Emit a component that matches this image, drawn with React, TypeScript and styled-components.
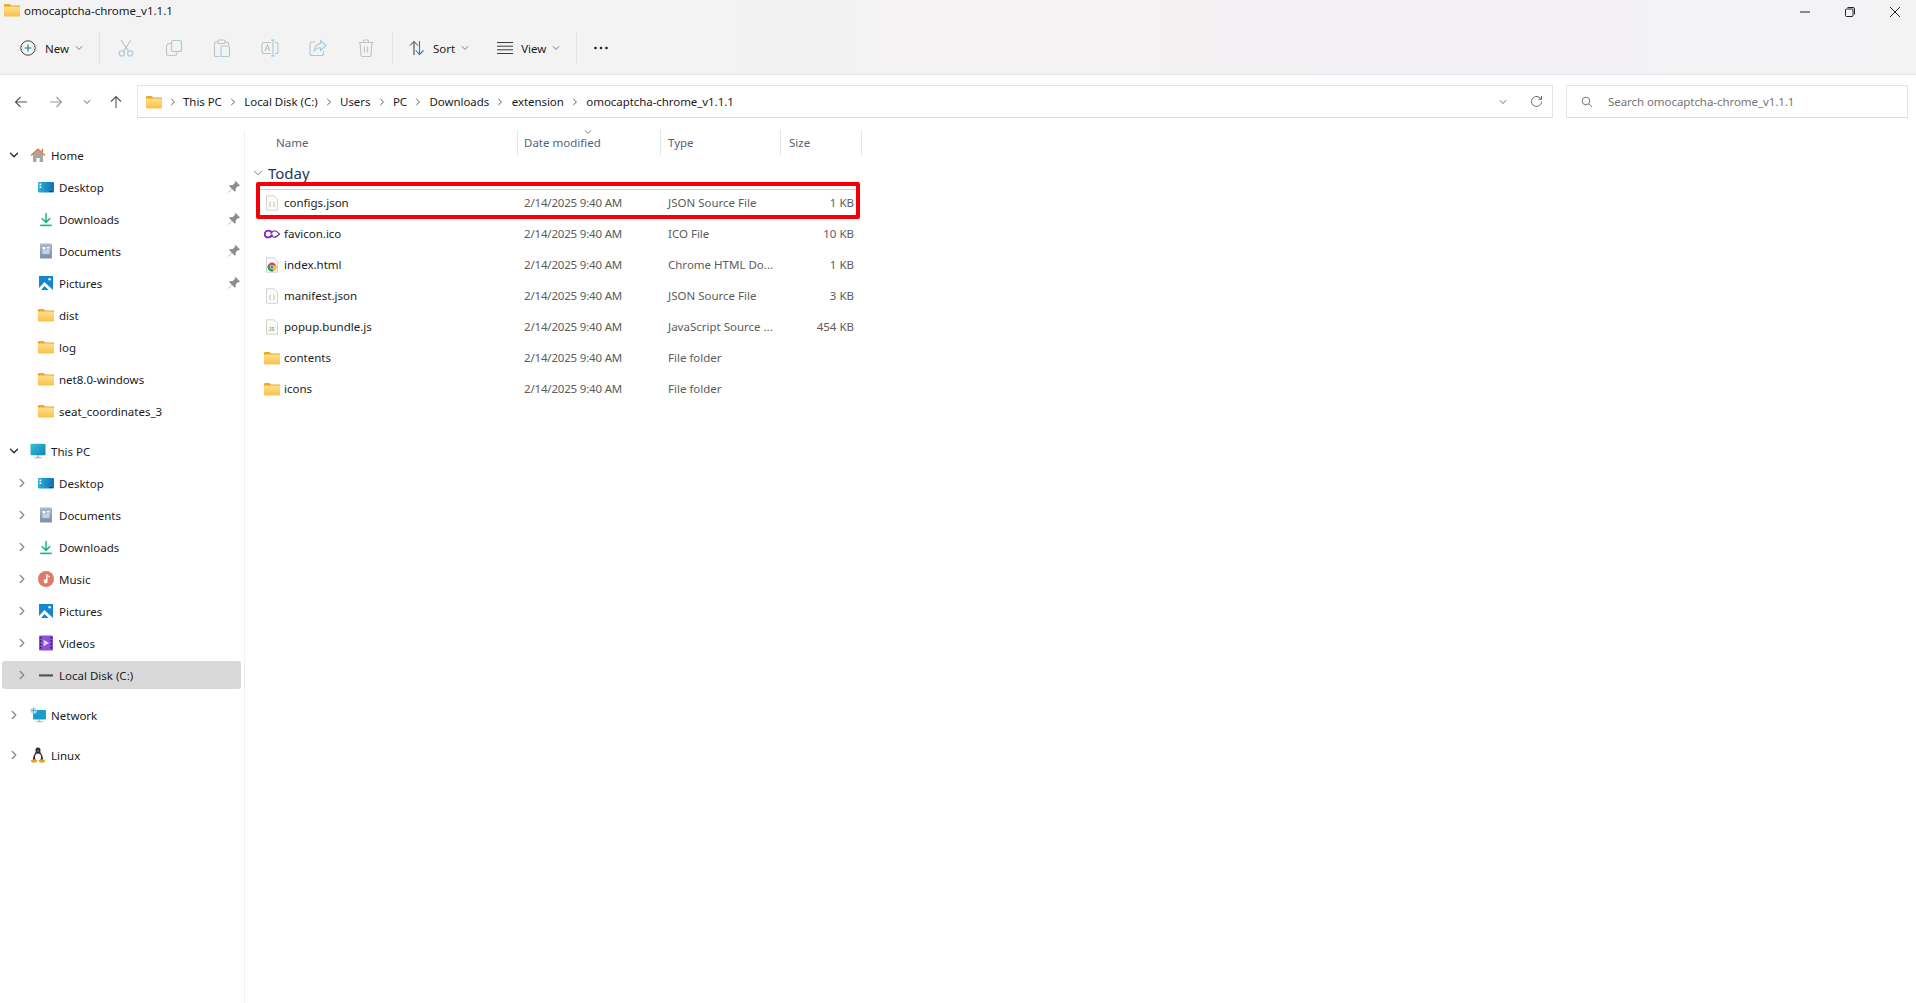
import React from "react";
import styled, { createGlobalStyle } from "styled-components";

const GlobalStyle = createGlobalStyle`
  html, body {
    margin: 0;
    height: 100%;
    overflow: hidden;
    background: #fff;
  }
  body {
    font-family: "Noto Sans", "Open Sans", "Liberation Sans", sans-serif;
    font-size: 11.5px;
    color: #1b1b1b;
  }
  svg {
    display: block;
    flex-shrink: 0;
  }
`;

const Window = styled.div`
  display: flex;
  flex-direction: column;
  height: 1003px;
`;

const Chrome = styled.div`
  background: linear-gradient(90deg, #f3f3f3 0%, #f3f3f4 35%, #f5f2f3 58%, #f3f1f6 75%, #f3f3f4 100%);
  border-bottom: 1px solid #e4e4e4;
`;

const TitleBar = styled.div`
  display: flex;
  align-items: center;
  height: 20px;
  padding: 0 16px 0 4px;
`;

const Title = styled.div`
  flex: 1;
  margin-left: 4px;
`;

const WinButtons = styled.div`
  display: flex;
  gap: 35px;
  padding-top: 4px;
`;

const Toolbar = styled.div`
  display: flex;
  align-items: center;
  height: 54px;
  box-sizing: border-box;
  padding: 2px 0 0 20px;
`;

const Label = styled.span`
  white-space: nowrap;
`;

const TextButton = styled.div<{ $ml?: number }>`
  display: flex;
  align-items: center;
  gap: 8px;
  margin-left: ${(p) => p.$ml ?? 0}px;
`;

const CaretBox = styled.div`
  margin-left: -2px;
`;

const ToolSep = styled.div<{ $ml: number }>`
  width: 1px;
  height: 32px;
  background: #e3e3e3;
  margin-left: ${(p) => p.$ml}px;
`;

const ToolGroup = styled.div`
  display: flex;
  margin-left: 2px;
`;

const ToolIcon = styled.div`
  display: flex;
  justify-content: center;
  width: 48px;
`;

const NavBar = styled.div`
  display: flex;
  align-items: flex-start;
  height: 55px;
  box-sizing: border-box;
  padding: 10px 8px 0 4px;
`;

const NavButtons = styled.div`
  display: grid;
  grid-template-columns: 34px 36px 25px 33px;
  justify-items: center;
  align-items: center;
  height: 33px;
`;

const AddressBox = styled.div`
  flex: 1;
  display: flex;
  align-items: center;
  height: 33px;
  margin-left: 5px;
  padding: 0 9px 0 8px;
  box-sizing: border-box;
  border: 1px solid #e5e5e5;
  border-bottom-color: #dcdcdc;
`;

const Crumbs = styled.div`
  flex: 1;
  display: flex;
  align-items: center;
  letter-spacing: -0.06px;
`;

const CrumbSep = styled.div<{ $w?: number }>`
  display: flex;
  justify-content: center;
  width: ${(p) => p.$w ?? 22.5}px;
`;

const AddressTools = styled.div`
  display: flex;
  align-items: center;
  gap: 23px;
`;

const SearchBox = styled.div`
  display: flex;
  align-items: center;
  gap: 15px;
  width: 342px;
  height: 33px;
  margin-left: 13px;
  padding-left: 14px;
  box-sizing: border-box;
  border: 1px solid #e5e5e5;
  border-bottom-color: #dcdcdc;
  color: #757575;
  letter-spacing: -0.06px;
`;

const Body = styled.div`
  flex: 1;
  display: flex;
  min-height: 0;
`;

const Sidebar = styled.div`
  width: 245px;
  padding-top: 9px;
  box-sizing: border-box;
  border-right: 1px solid #f0f0f0;
`;

const NavGroup = styled.div<{ $mb?: number }>`
  margin-bottom: ${(p) => p.$mb ?? 8}px;
`;

const TreeRow = styled.div<{ $nested?: boolean; $selected?: boolean }>`
  display: flex;
  align-items: center;
  height: ${(p) => (p.$selected ? 28 : 32)}px;
  margin: ${(p) => (p.$selected ? "2px 3px 2px 2px" : "0")};
  padding-left: ${(p) => (p.$nested ? 16 : 8) - (p.$selected ? 2 : 0)}px;
  padding-right: 3px;
  border-radius: 3px;
  background: ${(p) => (p.$selected ? "#d9d9d9" : "transparent")};
`;

const TreeCaret = styled.div`
  display: flex;
  justify-content: center;
  width: 12px;
  margin-right: 10px;
`;

const TreeLabel = styled.span`
  flex: 1;
  margin-left: 5px;
  white-space: nowrap;
`;

const Details = styled.div`
  flex: 1;
  min-width: 0;
  padding-left: 1px;
`;

const ColumnGrid = styled.div`
  display: grid;
  grid-template-columns: 272px 143px 120px 81px;
`;

const HeaderRow = styled(ColumnGrid)`
  height: 25px;
  align-items: stretch;
  color: #56627a;
`;

const HeaderCell = styled.div<{ $pad: number }>`
  position: relative;
  display: flex;
  align-items: center;
  padding-left: ${(p) => p.$pad}px;
  border-right: 1px solid #e5e5e5;
`;

const SortCaret = styled.div`
  position: absolute;
  top: -2px;
  left: 66px;
`;

const GroupHeader = styled.div`
  display: flex;
  align-items: center;
  gap: 5px;
  height: 28px;
  padding: 4px 0 0 7px;
  font-size: 15px;
  color: #1f3864;
`;

const FileRow = styled(ColumnGrid)<{ $marked?: boolean }>`
  position: relative;
  height: 31px;
  align-items: center;
  color: #5c5c5c;

  ${(p) =>
    p.$marked &&
    `
    &::before {
      content: "";
      position: absolute;
      top: 2px;
      left: 14px;
      width: 596px;
      height: 1px;
      background: #a9dde8;
    }
    &::after {
      content: "";
      position: absolute;
      top: -5px;
      left: 10px;
      width: 604px;
      height: 37px;
      box-sizing: border-box;
      border: 4px solid #f40006;
      border-radius: 2px;
    }
  `}
`;

const NameCell = styled.div`
  display: flex;
  align-items: center;
  gap: 4px;
  padding-left: 18px;
  color: #1b1b1b;
`;

const DateCell = styled.div`
  padding-left: 6px;
  white-space: nowrap;
  letter-spacing: -0.18px;
`;

const TypeCell = styled.div`
  padding-left: 7px;
  white-space: nowrap;
`;

const SizeCell = styled.div`
  padding-right: 8px;
  text-align: right;
`;

type CaretProps = { size?: number; color?: string; w?: number };

const caret = (d: string, { size = 10, color = "#666", w = 1.2 }: CaretProps) => (
  <svg width={size} height={size} viewBox="0 0 10 10" fill="none" stroke={color} strokeWidth={w}>
    <path d={d} strokeLinecap="round" strokeLinejoin="round" />
  </svg>
);
const CaretDown = (props: CaretProps) => caret("M1.5 3.2 5 6.8l3.5-3.6", props);
const CaretRight = (props: CaretProps) => caret("M3.2 1.5 6.8 5 3.2 8.5", props);

const FolderIcon = () => (
  <svg width="16" height="16" viewBox="0 0 16 16">
    <defs>
      <linearGradient id="fld" x1="0" y1="0" x2="0" y2="1">
        <stop offset="0" stopColor="#ffe08a" />
        <stop offset="1" stopColor="#fac04a" />
      </linearGradient>
    </defs>
    <path d="M0 3.2C0 2.5.5 2 1.2 2h4.2l1.8 1.6H16V6H0z" fill="#eda626" />
    <rect x="0" y="4.4" width="16" height="10.2" rx="1" fill="url(#fld)" />
  </svg>
);

const HomeIcon = () => (
  <svg width="16" height="16" viewBox="0 0 16 16">
    <path d="M3 7.5 8 3l5 4.5V15h-3.4v-4H6.4v4H3z" fill="#a6a6a4" />
    <path d="M.6 8 8 1.2 15.4 8l-.9 1L8 3.2 1.5 9z" fill="#e2723a" />
    <rect x="11.6" y="2" width="1.6" height="3" fill="#e2723a" />
  </svg>
);

const DesktopIcon = () => (
  <svg width="16" height="16" viewBox="0 0 16 16">
    <defs>
      <linearGradient id="dsk" x1="0" y1="0" x2="1" y2="0">
        <stop offset="0" stopColor="#2fb1d4" />
        <stop offset="1" stopColor="#0f6fb5" />
      </linearGradient>
    </defs>
    <rect x="0" y="3" width="16" height="10.5" rx="1" fill="url(#dsk)" />
    <rect x="1.5" y="4.6" width="1.8" height="1.6" fill="#fff" />
    <rect x="1.5" y="7.4" width="1.8" height="1.6" fill="#fff" />
    <rect x="11" y="12" width="4" height="1" fill="#0b4c80" />
  </svg>
);

const DownloadIcon = () => (
  <svg width="16" height="16" viewBox="0 0 16 16" fill="none" stroke="#17b28a" strokeWidth="1.5">
    <path d="M8 2v9.2M3.8 7.2 8 11.4l4.2-4.2" />
    <path d="M2.2 14.4h11.6" strokeWidth="1.6" />
  </svg>
);

const DocumentsIcon = () => (
  <svg width="16" height="16" viewBox="0 0 16 16">
    <defs>
      <linearGradient id="doc" x1="0" y1="0" x2="0" y2="1">
        <stop offset="0" stopColor="#a9bbd3" />
        <stop offset="1" stopColor="#7b8fae" />
      </linearGradient>
    </defs>
    <rect x="2" y="0.5" width="12" height="15" rx="1" fill="url(#doc)" />
    <path d="M4.5 4h3v2.4h-3zM9 4h2.5v1H9zM9 5.6h2.5v1H9zM4.5 7.6h7v1h-7zM4.5 9.6h7v1h-7z" fill="#fff" />
  </svg>
);

const PicturesIcon = () => (
  <svg width="16" height="16" viewBox="0 0 16 16">
    <rect x="1" y="1" width="14" height="14" fill="#1386cf" />
    <path d="M1 13 6.4 7l8.6 8H1z" fill="#fff" />
    <path d="M3 15l3.6-4 4 4z" fill="#1386cf" />
    <circle cx="11.6" cy="4.2" r="1.3" fill="#fff" />
  </svg>
);

const MusicIcon = () => (
  <svg width="16" height="16" viewBox="0 0 16 16">
    <circle cx="8" cy="8" r="8" fill="#dd7b68" />
    <path d="M8.2 3.2h1.4v7.2a2 2 0 1 1-1.4-1.9z" fill="#fff" />
    <path d="M9.6 3.2c.2 1.2 1.4 1.6 2.2 2.2v1.2c-.8-.4-1.8-.8-2.2-1.3z" fill="#fff" />
  </svg>
);

const VideosIcon = () => (
  <svg width="16" height="16" viewBox="0 0 16 16">
    <rect x="1" y="0.5" width="14" height="15" rx="1" fill="#8b4fd8" />
    <path d="M2 2h1.4v1.6H2zM2 5.2h1.4v1.6H2zM2 8.4h1.4V10H2zM2 11.8h1.4v1.6H2zM12.6 2H14v1.6h-1.4zM12.6 5.2H14v1.6h-1.4zM12.6 8.4H14V10h-1.4zM12.6 11.8H14v1.6h-1.4z" fill="#2a1650" />
    <path d="M5.6 4.8 11 8l-5.4 3.2z" fill="#e5d3fb" />
  </svg>
);

const DiskIcon = () => (
  <svg width="16" height="16" viewBox="0 0 16 16">
    <rect x="1" y="7" width="14" height="2.6" rx="0.6" fill="#555" />
    <rect x="1" y="7" width="14" height="1" fill="#7d7d7d" />
  </svg>
);

const MonitorIcon = () => (
  <svg width="16" height="16" viewBox="0 0 16 16">
    <defs>
      <linearGradient id="mon" x1="0" y1="0" x2="1" y2="1">
        <stop offset="0" stopColor="#35c3d6" />
        <stop offset="1" stopColor="#0f86b8" />
      </linearGradient>
    </defs>
    <rect x="0.5" y="0.8" width="15" height="11.4" rx="1" fill="url(#mon)" />
    <rect x="7.2" y="12.2" width="1.6" height="2" fill="#9fb0bb" />
    <rect x="4.6" y="14.2" width="6.8" height="1" fill="#9fb0bb" />
  </svg>
);

const NetworkIcon = () => (
  <svg width="16" height="16" viewBox="0 0 16 16">
    <rect x="3" y="3" width="13" height="9.4" rx="0.8" fill="#1b9ccb" />
    <rect x="8.8" y="12.4" width="1.4" height="1.8" fill="#9fb0bb" />
    <rect x="6.4" y="14.2" width="6.2" height="1" fill="#9fb0bb" />
    <circle cx="3.6" cy="3.6" r="3.2" fill="#bfe3f2" />
    <path d="M1 3.6h5.2M3.6 1v5.2" stroke="#3a9ccc" strokeWidth="0.8" />
  </svg>
);

const LinuxIcon = () => (
  <svg width="16" height="16" viewBox="0 0 16 16">
    <ellipse cx="8" cy="3.4" rx="2.5" ry="3" fill="#2b2b2b" />
    <path d="M5.600 5C5.200 7 3.200 8.600 3 11.200c-.1 1.600.8 2.800 2 2.800h6c1.200 0 2.100-1.200 2-2.800-.2-2.600-2.200-4.200-2.600-6.200z" fill="#2b2b2b" />
    <ellipse cx="8" cy="10.200" rx="3" ry="3.700" fill="#fff" />
    <path d="M6.900 3.600h2.200L8 5z" fill="#e9a21c" />
    <ellipse cx="4" cy="14" rx="3" ry="1.700" fill="#e9a21c" />
    <ellipse cx="12" cy="14" rx="3" ry="1.700" fill="#e9a21c" />
  </svg>
);

const PinIcon = () => (
  <svg width="14" height="14" viewBox="0 0 14 14">
    <path d="M8.6 1 13 5.4l-1 .8-1-.2-2.4 2.4.2 2.4-1 1L5 8.9 1.8 12.6l-.6-.4L4.8 8.7 2.1 6l1-1 2.4.2L8 2.8l-.2-1z" fill="#8a8f93" />
  </svg>
);

const PageIcon = ({ children }: { children?: React.ReactNode }) => (
  <svg width="16" height="16" viewBox="0 0 16 16">
    <path d="M2.5.8h7.600l3.400 3.400v11H2.500z" fill="#fcfcfa" stroke="#c6c6c6" strokeWidth="0.8" />
    {children}
  </svg>
);

const JsonIcon = () => (
  <PageIcon>
    <path d="M6.800 7c-1 0-.6 2.200-1.200 2.500.6.300.2 2.500 1.200 2.500M9.200 7c1 0 .6 2.200 1.200 2.500-.6.300-.2 2.500-1.200 2.500" fill="none" stroke="#a3ad7a" strokeWidth="0.8" />
  </PageIcon>
);

const JsIcon = () => (
  <PageIcon>
    <text x="4.400" y="12" fontSize="5" fontWeight="700" fontFamily="Liberation Sans" fill="#b1a75f">JS</text>
  </PageIcon>
);

const ChromeIcon = () => (
  <PageIcon>
    <circle cx="8" cy="10" r="4.400" fill="#e0473a" />
    <path d="M8 10 12 7.800a4.400 4.400 0 0 1-3 6.500z" fill="#f3c02c" />
    <path d="M8 10 9 14.300A4.400 4.400 0 0 1 4 8z" fill="#2fa34f" />
    <circle cx="8" cy="10" r="2" fill="#fff" />
    <circle cx="8" cy="10" r="1.500" fill="#3b78d8" />
  </PageIcon>
);

const FaviconIcon = () => (
  <svg width="16" height="16" viewBox="0 0 16 16" fill="none">
    <path d="M8 6.600C7 5.200 5.800 4.600 4.500 4.600 2.300 4.600.8 6 .8 8s1.500 3.400 3.700 3.400c1.700 0 2.900-1.300 4-3" stroke="#8e1fc0" strokeWidth="1.800" />
    <path d="M6.500 9.500c1.400 1 2.500 1.700 4 1.700 1.200 0 3.300-1.500 5-3.200-1.700-1.600-3.800-3.200-5-3.200-1.400 0-2.500 1.300-4 3" stroke="#5a2aa8" strokeWidth="1.100" />
  </svg>
);

const tint = { fill: "none", stroke: "#a9c8d9", strokeWidth: 1.1 };
const grey = { fill: "none", stroke: "#bcc4c9", strokeWidth: 1.1 };

const ScissorsIcon = () => (
  <svg width="18" height="18" viewBox="0 0 18 18">
    <path d="M4 1l7.800 11.600M14 1 6.200 12.600" {...grey} />
    <circle cx="4.800" cy="14.400" r="2.600" {...tint} />
    <circle cx="13.200" cy="14.400" r="2.600" {...tint} />
  </svg>
);
const CopyIcon = () => (
  <svg width="18" height="18" viewBox="0 0 18 18">
    <rect x="6.500" y="1.500" width="10" height="11" rx="2" {...tint} />
    <path d="M6.500 4.500h-2a3 3 0 0 0-3 3v6.500a2.500 2.500 0 0 0 2.500 2.500h5a3 3 0 0 0 3-3" {...grey} />
  </svg>
);
const PasteIcon = () => (
  <svg width="18" height="18" viewBox="0 0 18 18">
    <path d="M5 3H2.500a1 1 0 0 0-1 1v12.500a1 1 0 0 0 1 1H7M12 3h2.500a1 1 0 0 1 1 1v2" {...grey} />
    <rect x="5" y="1" width="7" height="3.500" rx="1" {...grey} />
    <rect x="8" y="7" width="8.500" height="10.500" rx="1.200" {...tint} />
  </svg>
);
const RenameIcon = () => (
  <svg width="18" height="18" viewBox="0 0 18 18">
    <path d="M10 3.500H3a2 2 0 0 0-2 2v7a2 2 0 0 0 2 2h7M14 3.500h1a2 2 0 0 1 2 2v7a2 2 0 0 1-2 2h-1" {...grey} />
    <path d="M3.800 12 6.400 6l2.600 6M4.800 10h3.200" {...tint} />
    <path d="M12 1v16M10 1h4M10 17h4" {...tint} />
  </svg>
);
const ShareIcon = () => (
  <svg width="18" height="18" viewBox="0 0 18 18">
    <path d="M6 3H3a2 2 0 0 0-2 2v9.500a2 2 0 0 0 2 2h9.500a2 2 0 0 0 2-2V12" {...grey} />
    <path d="M11.500 1.500 17 6.500l-5.500 5V8.800C8.500 8.800 6.300 10 5 12.500 5.200 8.500 7.600 5 11.500 4.600z" {...tint} />
  </svg>
);
const TrashIcon = () => (
  <svg width="18" height="18" viewBox="0 0 18 18">
    <path d="M1.500 3.500h15M6.500 3.500V2a1 1 0 0 1 1-1h3a1 1 0 0 1 1 1v1.500M3 3.500 4 16a1.500 1.500 0 0 0 1.500 1.500h7A1.500 1.500 0 0 0 14 16l1-12.500M7.500 7.500v6M10.500 7.500v6" {...grey} />
  </svg>
);
const NewIcon = () => (
  <svg width="16" height="16" viewBox="0 0 16 16" fill="none">
    <circle cx="8" cy="8" r="7.200" stroke="#444" strokeWidth="1" />
    <path d="M8 4.600v6.800M4.600 8h6.800" stroke="#0f7f96" strokeWidth="1.100" />
  </svg>
);
const SortIcon = () => (
  <svg width="16" height="16" viewBox="0 0 16 16" fill="none" strokeWidth="1">
    <path d="M5 15V1.500M1 5.500l4-4 4 4" stroke="#3a3a3a" />
    <path d="M10.500 1v13.500M6.800 10.500l3.700 4 4-4" stroke="#0f83c4" strokeWidth="1.100" />
  </svg>
);
const ViewIcon = () => (
  <svg width="16" height="16" viewBox="0 0 16 16" stroke="#3a3a3a" strokeWidth="1">
    <path d="M0 2.500h16M0 6.200h16M0 9.800h16M0 13.500h16" />
  </svg>
);
const DotsIcon = () => (
  <svg width="16" height="16" viewBox="0 0 16 16" fill="#222">
    <circle cx="2.500" cy="8" r="1.300" />
    <circle cx="8" cy="8" r="1.300" />
    <circle cx="13.500" cy="8" r="1.300" />
  </svg>
);

const arrow = (d: string, color: string) => (
  <svg width="14" height="14" viewBox="0 0 14 14" fill="none" stroke={color} strokeWidth="1.100">
    <path d={d} />
  </svg>
);

const RefreshIcon = () => (
  <svg width="13" height="13" viewBox="0 0 13 13" fill="none" stroke="#6a6a6a" strokeWidth="1">
    <path d="M11.500 6.500a5 5 0 1 1-1.600-3.700l1.600 1.400" />
    <path d="M11.500 1v3.300H8.300" />
  </svg>
);

const SearchIcon = () => (
  <svg width="12" height="12" viewBox="0 0 12 12" fill="none" stroke="#7a7a7a" strokeWidth="1">
    <circle cx="5" cy="5" r="3.800" />
    <path d="M7.700 7.700 11 11" />
  </svg>
);

const crumbs = ["This PC", "Local Disk (C:)", "Users", "PC", "Downloads", "extension", "omocaptcha-chrome_v1.1.1"];

type TreeItem = {
  label: string;
  icon: React.ReactNode;
  pinned?: boolean;
  selected?: boolean;
};

const homeItems: TreeItem[] = [
  { label: "Desktop", icon: <DesktopIcon />, pinned: true },
  { label: "Downloads", icon: <DownloadIcon />, pinned: true },
  { label: "Documents", icon: <DocumentsIcon />, pinned: true },
  { label: "Pictures", icon: <PicturesIcon />, pinned: true },
  { label: "dist", icon: <FolderIcon /> },
  { label: "log", icon: <FolderIcon /> },
  { label: "net8.0-windows", icon: <FolderIcon /> },
  { label: "seat_coordinates_3", icon: <FolderIcon /> },
];

const pcItems: TreeItem[] = [
  { label: "Desktop", icon: <DesktopIcon /> },
  { label: "Documents", icon: <DocumentsIcon /> },
  { label: "Downloads", icon: <DownloadIcon /> },
  { label: "Music", icon: <MusicIcon /> },
  { label: "Pictures", icon: <PicturesIcon /> },
  { label: "Videos", icon: <VideosIcon /> },
  { label: "Local Disk (C:)", icon: <DiskIcon />, selected: true },
];

const files = [
  { name: "configs.json", icon: <JsonIcon />, type: "JSON Source File", size: "1 KB", marked: true },
  { name: "favicon.ico", icon: <FaviconIcon />, type: "ICO File", size: "10 KB" },
  { name: "index.html", icon: <ChromeIcon />, type: "Chrome HTML Do...", size: "1 KB" },
  { name: "manifest.json", icon: <JsonIcon />, type: "JSON Source File", size: "3 KB" },
  { name: "popup.bundle.js", icon: <JsIcon />, type: "JavaScript Source ...", size: "454 KB" },
  { name: "contents", icon: <FolderIcon />, type: "File folder", size: "" },
  { name: "icons", icon: <FolderIcon />, type: "File folder", size: "" },
];

const App = () => {
  return (
    <Window>
      <GlobalStyle />
      <Chrome>
        <TitleBar>
          <FolderIcon />
          <Title>omocaptcha-chrome_v1.1.1</Title>
          <WinButtons>
            <svg width="10" height="10" viewBox="0 0 10 10" stroke="#222"><path d="M0 5h10" /></svg>
            <svg width="10" height="10" viewBox="0 0 10 10" fill="none" stroke="#222"><rect x="0.5" y="2" width="7.5" height="7.5" rx="1" /><path d="M2.500.5H8A1.500 1.500 0 0 1 9.500 2v5.500" /></svg>
            <svg width="10" height="10" viewBox="0 0 10 10" stroke="#222"><path d="M0 0l10 10M10 0 0 10" /></svg>
          </WinButtons>
        </TitleBar>
        <Toolbar>
          <TextButton>
            <NewIcon />
            <Label style={{ marginLeft: 1 }}>New</Label>
            <CaretBox><CaretDown size={8} color="#777" /></CaretBox>
          </TextButton>
          <ToolSep $ml={16} />
          <ToolGroup>
            <ToolIcon><ScissorsIcon /></ToolIcon>
            <ToolIcon><CopyIcon /></ToolIcon>
            <ToolIcon><PasteIcon /></ToolIcon>
            <ToolIcon><RenameIcon /></ToolIcon>
            <ToolIcon><ShareIcon /></ToolIcon>
            <ToolIcon><TrashIcon /></ToolIcon>
          </ToolGroup>
          <ToolSep $ml={2} />
          <TextButton $ml={16}>
            <SortIcon />
            <Label>Sort</Label>
            <CaretBox><CaretDown size={8} color="#777" /></CaretBox>
          </TextButton>
          <TextButton $ml={28}>
            <ViewIcon />
            <Label>View</Label>
            <CaretBox><CaretDown size={8} color="#777" /></CaretBox>
          </TextButton>
          <ToolSep $ml={16} />
          <TextButton $ml={16}>
            <DotsIcon />
          </TextButton>
        </Toolbar>
      </Chrome>
      <NavBar>
        <NavButtons>
          {arrow("M13 7H1.500M6.500 2 1.500 7l5 5", "#555")}
          {arrow("M1 7h11.500M7.500 2l5 5-5 5", "#9a9a9a")}
          <CaretDown size={8} color="#555" />
          {arrow("M7 13V1.500M2 6.500l5-5 5 5", "#555")}
        </NavButtons>
        <AddressBox>
          <Crumbs>
            <FolderIcon />
            <CrumbSep $w={21}><CaretRight size={8} color="#555" /></CrumbSep>
            {crumbs.map((c, i) => (
              <React.Fragment key={c}>
                <Label>{c}</Label>
                {i < crumbs.length - 1 && (
                  <CrumbSep><CaretRight size={8} color="#555" /></CrumbSep>
                )}
              </React.Fragment>
            ))}
          </Crumbs>
          <AddressTools>
            <CaretDown size={8} color="#666" />
            <RefreshIcon />
          </AddressTools>
        </AddressBox>
        <SearchBox>
          <SearchIcon />
          <span>Search omocaptcha-chrome_v1.1.1</span>
        </SearchBox>
      </NavBar>
      <Body>
        <Sidebar>
          <NavGroup>
            <TreeRow>
              <TreeCaret><CaretDown size={10} color="#333" w={1.4} /></TreeCaret>
              <HomeIcon />
              <TreeLabel>Home</TreeLabel>
            </TreeRow>
            {homeItems.map((item) => (
              <TreeRow key={item.label} $nested>
                <TreeCaret />
                {item.icon}
                <TreeLabel>{item.label}</TreeLabel>
                {item.pinned && <PinIcon />}
              </TreeRow>
            ))}
          </NavGroup>
          <NavGroup $mb={10}>
            <TreeRow>
              <TreeCaret><CaretDown size={10} color="#333" w={1.4} /></TreeCaret>
              <MonitorIcon />
              <TreeLabel>This PC</TreeLabel>
            </TreeRow>
            {pcItems.map((item) => (
              <TreeRow key={item.label} $nested $selected={item.selected}>
                <TreeCaret><CaretRight size={10} color="#888" w={1.3} /></TreeCaret>
                {item.icon}
                <TreeLabel>{item.label}</TreeLabel>
              </TreeRow>
            ))}
          </NavGroup>
          <NavGroup>
            <TreeRow>
              <TreeCaret><CaretRight size={10} color="#888" w={1.3} /></TreeCaret>
              <NetworkIcon />
              <TreeLabel>Network</TreeLabel>
            </TreeRow>
          </NavGroup>
          <NavGroup>
            <TreeRow>
              <TreeCaret><CaretRight size={10} color="#888" w={1.3} /></TreeCaret>
              <LinuxIcon />
              <TreeLabel>Linux</TreeLabel>
            </TreeRow>
          </NavGroup>
        </Sidebar>
        <Details>
          <HeaderRow>
            <HeaderCell $pad={30}>Name</HeaderCell>
            <HeaderCell $pad={6}>
              <SortCaret><CaretDown size={8} color="#777" /></SortCaret>
              Date modified
            </HeaderCell>
            <HeaderCell $pad={7}>Type</HeaderCell>
            <HeaderCell $pad={8}>Size</HeaderCell>
          </HeaderRow>
          <GroupHeader>
            <CaretDown size={10} color="#7a7a7a" w={1} />
            Today
          </GroupHeader>
          {files.map((f) => (
            <FileRow key={f.name} $marked={f.marked}>
              <NameCell>
                {f.icon}
                {f.name}
              </NameCell>
              <DateCell>2/14/2025 9:40 AM</DateCell>
              <TypeCell>{f.type}</TypeCell>
              <SizeCell>{f.size}</SizeCell>
            </FileRow>
          ))}
        </Details>
      </Body>
    </Window>
  );
};

export default App;
